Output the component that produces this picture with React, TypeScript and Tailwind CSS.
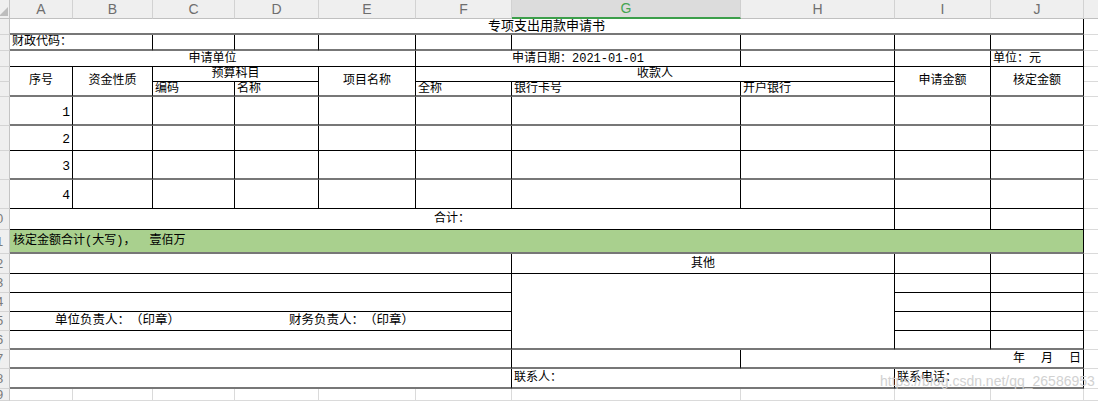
import React from "react";

// border helpers
const vr = "border-r border-r-black";
const gr = "border-r border-r-[#dadada]";
const thin = "border-b border-b-black";
const thick = "border-b-2 border-b-[#777777]";
const gb = "border-b border-b-[#dadada]";

function C({ className = "", children }: { className?: string; children?: React.ReactNode }) {
  return (
    <div className={`flex min-w-0 items-center overflow-hidden whitespace-pre leading-none ${className}`}>
      {children}
    </div>
  );
}

function RowHead({ n }: { n: number }) {
  return (
    <div className="flex items-center overflow-hidden border-r border-b border-r-[#c4c4c4] border-b-[#d4d4d4] bg-[#efefef] font-['Liberation_Sans',sans-serif] text-[13px] text-[#7a7a7a]">
      {n >= 10 && <span className="-ml-[4px]">{n % 10}</span>}
    </div>
  );
}

const letters = ["A", "B", "C", "D", "E", "F", "G", "H", "I", "J"];

const items = [
  { n: 1, b: thick },
  { n: 2, b: thin },
  { n: 3, b: thick },
  { n: 4, b: thin },
];

export default function App() {
  return (
    <div className="relative h-[401px] w-[1098px] overflow-hidden bg-white font-['Liberation_Mono','Noto_Sans_CJK_SC',monospace] text-[12px] text-black [text-spacing-trim:space-all]">
      <div className="grid grid-cols-[10px_63px_80px_82px_84px_97px_96px_229px_154px_96px_93px_14px] grid-rows-[19px_16px_16px_16px_15px_15px_29px_25px_29px_29px_21px_24px_20px_19px_19px_19px_19px_19px_20px_12px]">
        {/* column headers */}
        <div className="relative border-r border-b border-r-[#c4c4c4] border-b-[#c0c0c0] bg-[#efefef]">
          <svg className="absolute inset-0" width="10" height="19" viewBox="0 0 10 19">
            <polygon points="8,7 8,16 -1,16" fill="#bdbdbd" />
          </svg>
        </div>
        {letters.map((l) =>
          l === "G" ? (
            <div
              key={l}
              className="flex items-center justify-center border-r border-b-2 border-r-[#cfcfcf] border-b-[#3c9e4a] bg-[#dcdcdc] font-['Liberation_Sans',sans-serif] text-[14px] text-[#45a552]"
            >
              {l}
            </div>
          ) : (
            <div
              key={l}
              className="flex items-center justify-center border-r border-b border-r-[#d2d2d2] border-b-[#c0c0c0] bg-[#efefef] font-['Liberation_Sans',sans-serif] text-[14px] text-[#6e6e6e]"
            >
              {l}
            </div>
          )
        )}
        <div className="border-b border-b-[#c0c0c0] bg-[#efefef]" />

        {/* 1: title */}
        <RowHead n={1} />
        <C className={`col-span-10 justify-center text-[13px] ${vr} ${thick}`}>专项支出用款申请书</C>
        <C className={gb} />

        {/* 2 */}
        <RowHead n={2} />
        <C className={`col-span-2 pl-[2px] ${vr} ${thick}`}>财政代码：</C>
        <C className={`${vr} ${thick}`} />
        <C className={`${vr} ${thick}`} />
        <C className={`${vr} ${thick}`} />
        <C className={`${vr} ${thick}`} />
        <C className={`${vr} ${thick}`} />
        <C className={`${vr} ${thick}`} />
        <C className={`${vr} ${thick}`} />
        <C className={`${vr} ${thick}`} />
        <C className={gb} />

        {/* 3 */}
        <RowHead n={3} />
        <C className={`col-span-5 justify-center ${vr} ${thin}`}>申请单位</C>
        <C className={`col-span-2 justify-center ${vr} ${thin}`}>申请日期：2021-01-01</C>
        <C className={`${vr} ${thin}`} />
        <C className={`${vr} ${thin}`} />
        <C className={`pl-[2px] ${vr} ${thin}`}>单位：元</C>
        <C className={gb} />

        {/* 4 */}
        <RowHead n={4} />
        <C className={`row-span-2 justify-center ${vr} ${thick}`}>序号</C>
        <C className={`row-span-2 justify-center ${vr} ${thick}`}>资金性质</C>
        <C className={`col-span-2 justify-center ${vr} ${thin}`}>预算科目</C>
        <C className={`row-span-2 justify-center ${vr} ${thick}`}>项目名称</C>
        <C className={`col-span-3 justify-center ${vr} ${thin}`}>收款人</C>
        <C className={`row-span-2 justify-center ${vr} ${thick}`}>申请金额</C>
        <C className={`row-span-2 justify-center ${vr} ${thick}`}>核定金额</C>
        <C className={gb} />

        {/* 5 */}
        <RowHead n={5} />
        <C className={`pl-[2px] ${vr} ${thick}`}>编码</C>
        <C className={`pl-[2px] ${vr} ${thick}`}>名称</C>
        <C className={`pl-[2px] ${vr} ${thick}`}>全称</C>
        <C className={`pl-[2px] ${vr} ${thick}`}>银行卡号</C>
        <C className={`pl-[2px] ${vr} ${thick}`}>开户银行</C>
        <C className={gb} />

        {/* 6-9: item rows */}
        {items.map((it) => (
          <React.Fragment key={it.n}>
            <RowHead n={it.n + 5} />
            <C className={`justify-end pt-[3px] pr-[2px] text-[13px] ${vr} ${it.b}`}>{it.n}</C>
            <C className={`${vr} ${it.b}`} />
            <C className={`${vr} ${it.b}`} />
            <C className={`${vr} ${it.b}`} />
            <C className={`${vr} ${it.b}`} />
            <C className={`${vr} ${it.b}`} />
            <C className={`${vr} ${it.b}`} />
            <C className={`${vr} ${it.b}`} />
            <C className={`${vr} ${it.b}`} />
            <C className={`${vr} ${it.b}`} />
            <C className={gb} />
          </React.Fragment>
        ))}

        {/* 10 */}
        <RowHead n={10} />
        <C className={`col-span-8 justify-center ${vr} ${thin}`}>合计：</C>
        <C className={`${vr} ${thin}`} />
        <C className={`${vr} ${thin}`} />
        <C className={gb} />

        {/* 11 */}
        <RowHead n={11} />
        <C className={`col-span-10 bg-[#a9d08e] pl-[3px] ${vr} ${thick}`}>
          <span>核定金额合计(大写)，</span>
          <span className="ml-[14px]">壹佰万</span>
        </C>
        <C className={gb} />

        {/* 12 */}
        <RowHead n={12} />
        <C className={`col-span-6 ${vr} ${thin}`} />
        <C className={`col-span-2 justify-center ${vr} ${thin}`}>其他</C>
        <C className={`${vr} ${thin}`} />
        <C className={`${vr} ${thin}`} />
        <C className={gb} />

        {/* 13 */}
        <RowHead n={13} />
        <C className={`col-span-6 ${vr} ${thin}`} />
        <C className={`col-span-2 row-span-4 ${vr} ${thick}`} />
        <C className={`${vr} ${thin}`} />
        <C className={`${vr} ${thin}`} />
        <C className={gb} />

        {/* 14 */}
        <RowHead n={14} />
        <C className={`col-span-6 ${vr} ${thin}`} />
        <C className={`${vr} ${thin}`} />
        <C className={`${vr} ${thin}`} />
        <C className={gb} />

        {/* 15 */}
        <RowHead n={15} />
        <C className={`col-span-6 pl-[45px] text-[12.5px] ${vr} ${thin}`}>
          <span className="w-[234px] shrink-0">单位负责人：（印章）</span>
          <span>财务负责人：（印章）</span>
        </C>
        <C className={`${vr} ${thin}`} />
        <C className={`${vr} ${thin}`} />
        <C className={gb} />

        {/* 16 */}
        <RowHead n={16} />
        <C className={`col-span-6 ${vr} ${thick}`} />
        <C className={`${vr} ${thick}`} />
        <C className={`${vr} ${thick}`} />
        <C className={gb} />

        {/* 17 */}
        <RowHead n={17} />
        <C className={`col-span-6 ${vr} ${thick}`} />
        <C className={`${vr} ${thick}`} />
        <C className={`col-span-3 justify-end gap-[16px] pr-[2px] ${vr} ${thick}`}>
          <span>年</span>
          <span>月</span>
          <span>日</span>
        </C>
        <C className={gb} />

        {/* 18 */}
        <RowHead n={18} />
        <C className={`col-span-6 ${vr} ${thick}`} />
        <C className={`col-span-2 pl-[2px] ${vr} ${thick}`}>联系人：</C>
        <C className={`col-span-2 pl-[2px] ${vr} ${thick}`}>联系电话：</C>
        <C className={gb} />

        {/* 19 */}
        <RowHead n={19} />
        {letters.map((l) => (
          <C key={l} className={`${gr} ${gb}`} />
        ))}
        <C className={gb} />
      </div>

      {/* watermark */}
      <div className="pointer-events-none absolute top-[374px] left-[880px] font-['Liberation_Sans',sans-serif] text-[14px] leading-none text-[#cdcdcd] opacity-90">
        https://blog.csdn.net/qq_26586953
      </div>
    </div>
  );
}
